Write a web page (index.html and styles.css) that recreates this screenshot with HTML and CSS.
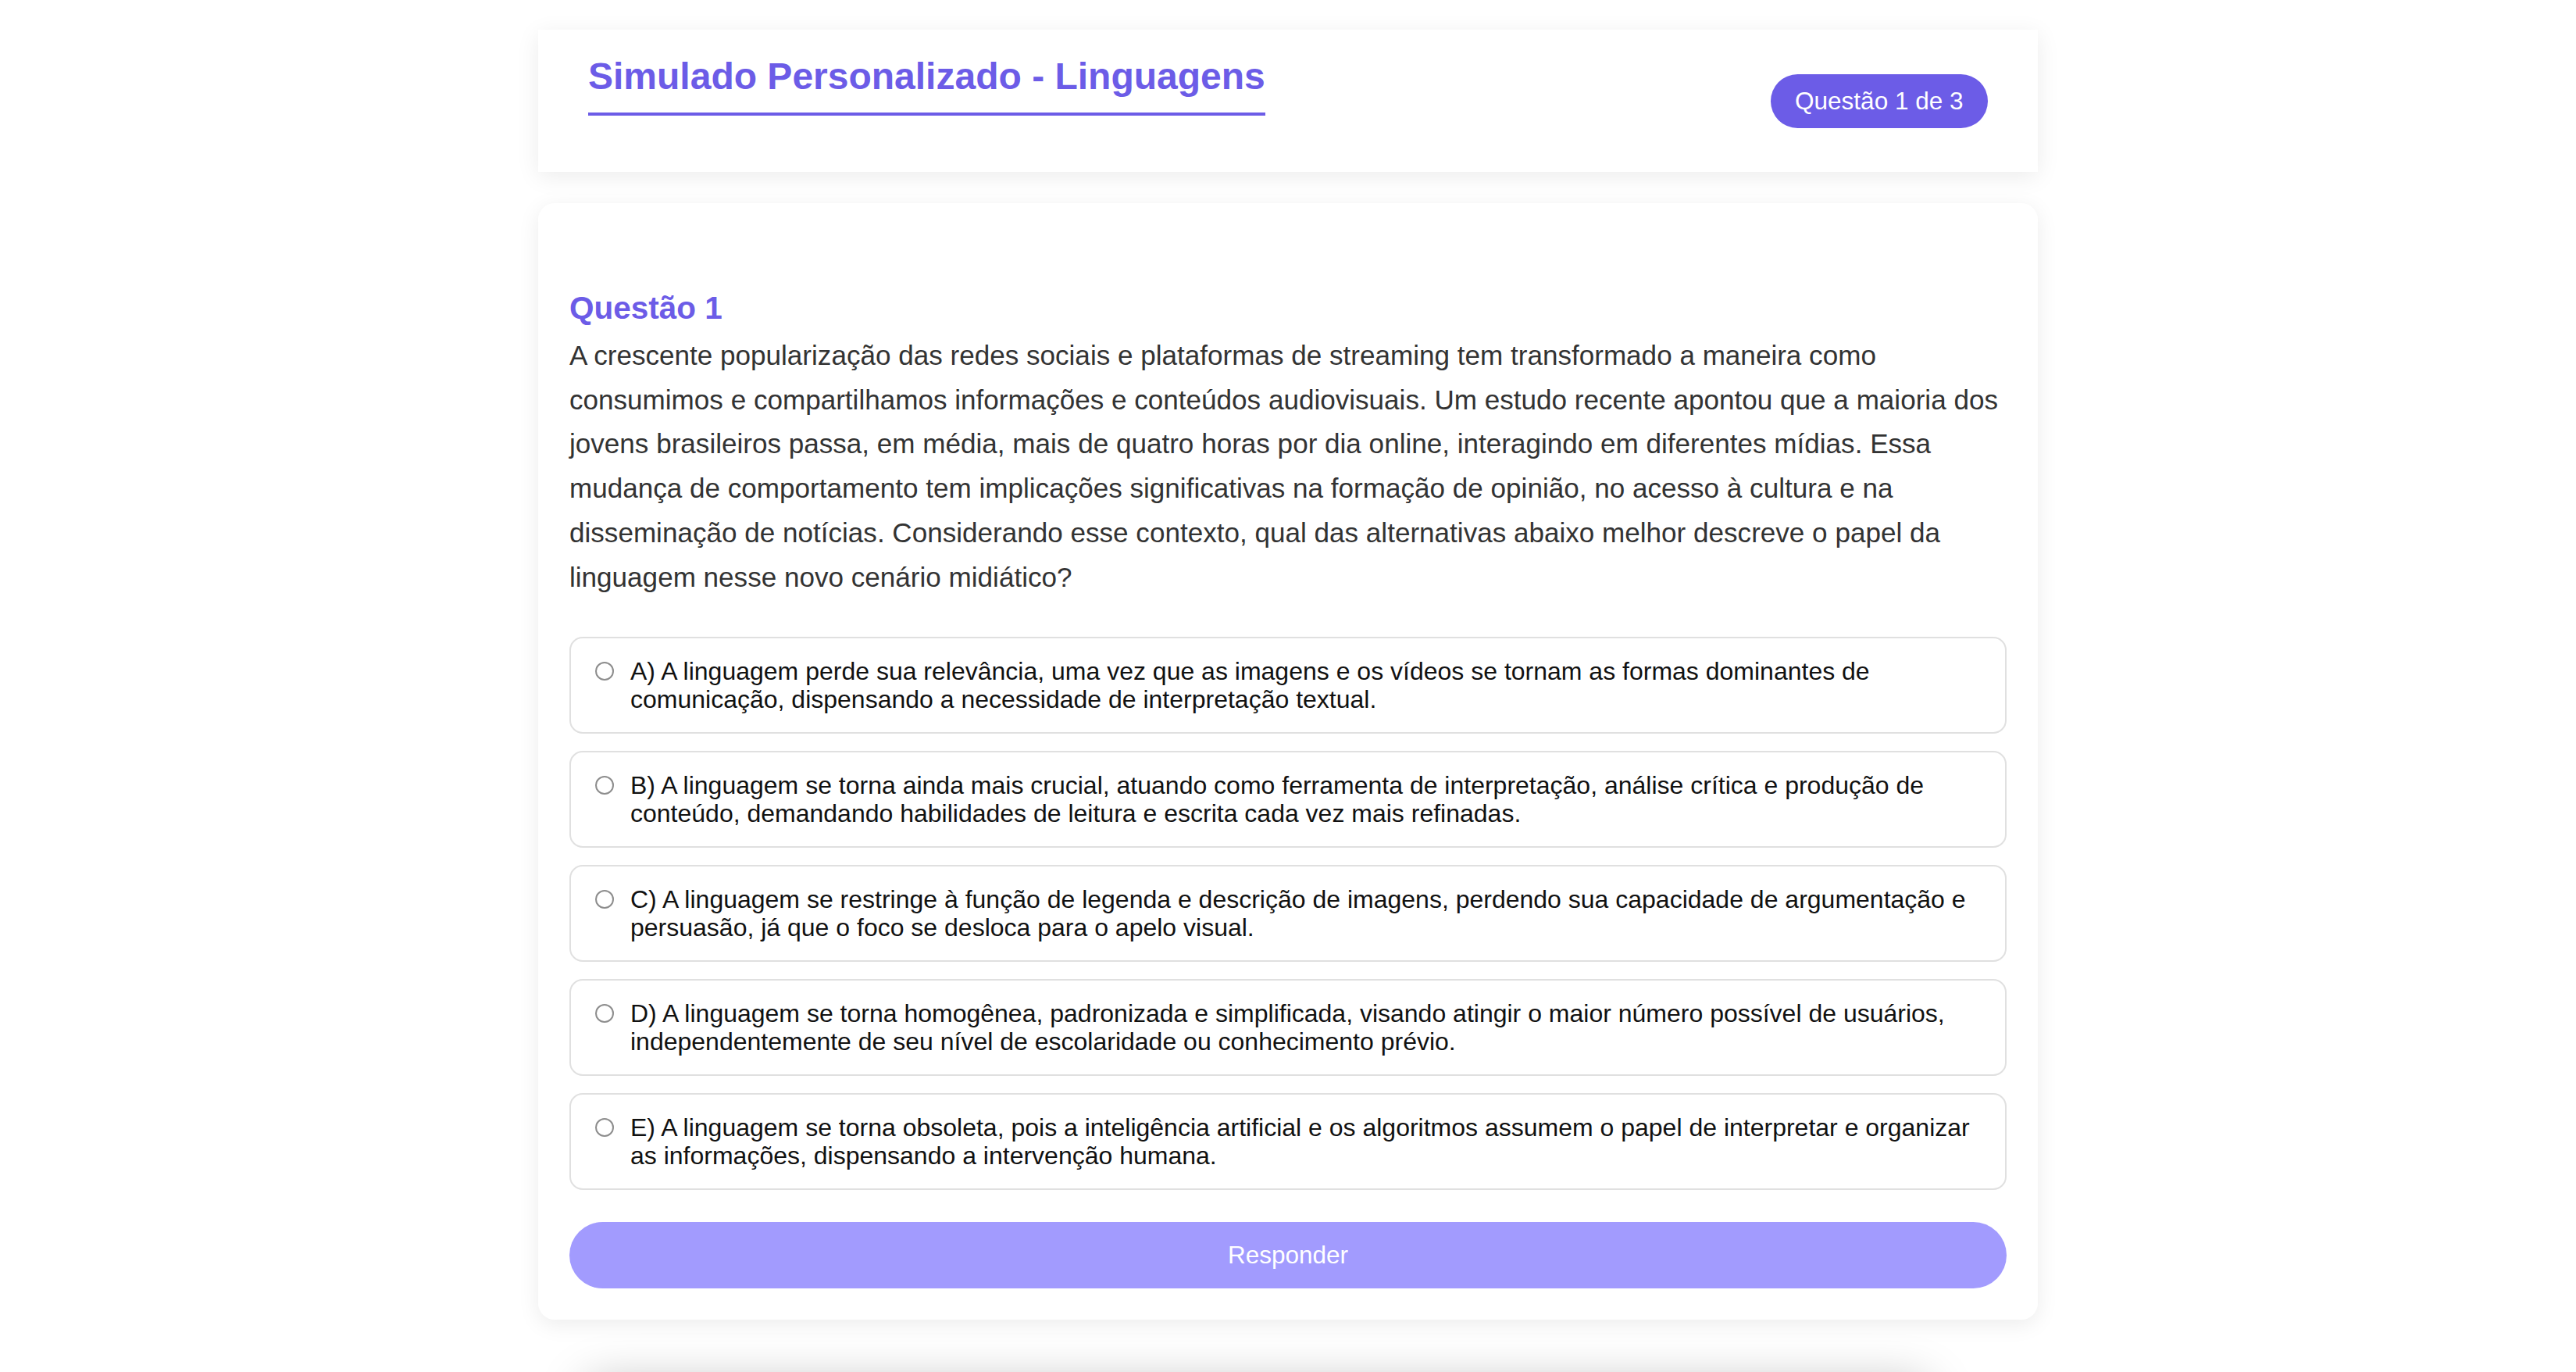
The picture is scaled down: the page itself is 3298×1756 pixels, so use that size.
FILE: index.html
```html
<!DOCTYPE html>
<html lang="pt-BR">
<head>
<meta charset="utf-8">
<title>Simulado Personalizado - Linguagens</title>
<link rel="stylesheet" href="styles.css">
</head>
<body>
<div class="container">
  <header class="top-card">
    <h1 class="title">Simulado Personalizado - Linguagens</h1>
    <span class="badge">Questão 1 de 3</span>
  </header>

  <main class="question-card">
    <h2 class="q-title">Questão 1</h2>
    <p class="q-text">A crescente popularização das redes sociais e plataformas de streaming tem transformado a maneira como consumimos e compartilhamos informações e conteúdos audiovisuais. Um estudo recente apontou que a maioria dos jovens brasileiros passa, em média, mais de quatro horas por dia online, interagindo em diferentes mídias. Essa mudança de comportamento tem implicações significativas na formação de opinião, no acesso à cultura e na disseminação de notícias. Considerando esse contexto, qual das alternativas abaixo melhor descreve o papel da linguagem nesse novo cenário midiático?</p>

    <div class="options">
      <label class="option"><input type="radio" name="q1" class="radio"><span>A) A linguagem perde sua relevância, uma vez que as imagens e os vídeos se tornam as formas dominantes de comunicação, dispensando a necessidade de interpretação textual.</span></label>
      <label class="option"><input type="radio" name="q1" class="radio"><span>B) A linguagem se torna ainda mais crucial, atuando como ferramenta de interpretação, análise crítica e produção de conteúdo, demandando habilidades de leitura e escrita cada vez mais refinadas.</span></label>
      <label class="option"><input type="radio" name="q1" class="radio"><span>C) A linguagem se restringe à função de legenda e descrição de imagens, perdendo sua capacidade de argumentação e persuasão, já que o foco se desloca para o apelo visual.</span></label>
      <label class="option"><input type="radio" name="q1" class="radio"><span>D) A linguagem se torna homogênea, padronizada e simplificada, visando atingir o maior número possível de usuários, independentemente de seu nível de escolaridade ou conhecimento prévio.</span></label>
      <label class="option"><input type="radio" name="q1" class="radio"><span>E) A linguagem se torna obsoleta, pois a inteligência artificial e os algoritmos assumem o papel de interpretar e organizar as informações, dispensando a intervenção humana.</span></label>
    </div>

    <button class="submit" type="button">Responder</button>
  </main>

  <div class="next-card"></div>
</div>
</body>
</html>
```
FILE: styles.css
```css
* { box-sizing: border-box; }

html, body {
  margin: 0;
  padding: 0;
  background: #ffffff;
  overflow: hidden;
}

body {
  font-family: "Liberation Sans", Arial, Helvetica, sans-serif;
  color: #333333;
}

.container {
  width: 1920px;
  margin: 0 auto;
  padding-top: 38px;
}

.top-card {
  background: #ffffff;
  display: flex;
  justify-content: space-between;
  align-items: center;
  padding: 32px 64px 34px 64px;
  box-shadow: 0 6px 28px rgba(0, 0, 0, 0.08);
}

.title {
  margin: 0 0 38px 0;
  font-size: 48px;
  font-weight: 700;
  line-height: 55px;
  color: #6c5ce7;
  display: inline-block;
  padding-bottom: 19px;
  border-bottom: 4px solid #6c5ce7;
}

.badge {
  background: #6c5ce7;
  color: #ffffff;
  font-size: 31.5px;
  line-height: 36px;
  padding: 16.5px 31.5px;
  border-radius: 40px;
  margin-top: 2px;
}

.question-card {
  margin-top: 40px;
  background: #ffffff;
  border-radius: 21px;
  padding: 40px;
  box-shadow: 0 6px 28px rgba(0, 0, 0, 0.08);
}

.q-title {
  margin: 71px 0 10px 0;
  font-size: 40.5px;
  font-weight: 700;
  line-height: 46px;
  color: #6c5ce7;
}

.q-text {
  margin: 0 0 48px 0;
  font-size: 35.1px;
  line-height: 56.7px;
  color: #333333;
}

.options {
  display: flex;
  flex-direction: column;
  gap: 22px;
}

.option {
  display: flex;
  align-items: flex-start;
  padding: 24px 30px;
  border: 2px solid #e0e0e0;
  border-radius: 17px;
  font-size: 32px;
  line-height: 36px;
  color: #111111;
}

.radio {
  appearance: none;
  -webkit-appearance: none;
  flex: 0 0 24px;
  width: 24px;
  height: 24px;
  margin: 6px 21px 0 1px;
  border: 2px solid #8d8d8d;
  border-radius: 50%;
  background: #ffffff;
}

.submit {
  display: block;
  width: 100%;
  height: 85px;
  margin-top: 41px;
  border: none;
  border-radius: 43px;
  background: #a29bfe;
  color: #ffffff;
  font-family: "Liberation Sans", Arial, Helvetica, sans-serif;
  font-size: 31.5px;
}

.next-card {
  width: 1720px;
  height: 300px;
  margin: 80px 0 0 60px;
  background: #ffffff;
  border-radius: 21px;
  box-shadow: 0 0 60px rgba(0, 0, 0, 0.25);
}
```
